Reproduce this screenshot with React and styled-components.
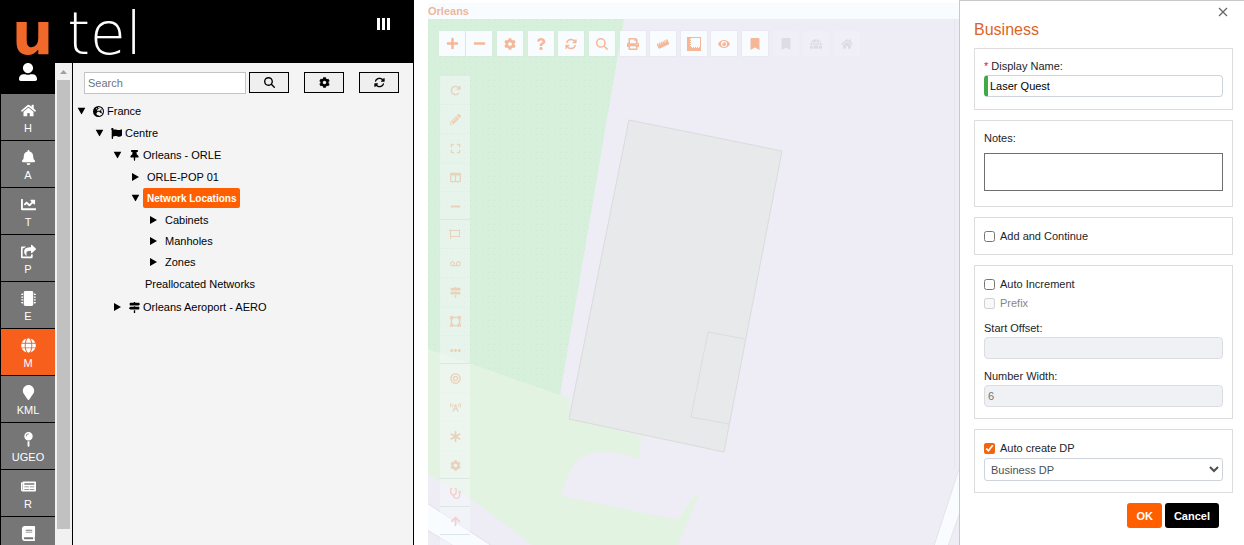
import React, { useState } from 'react';
import styled, { createGlobalStyle, css } from 'styled-components';
import {
    FaArrowUp, FaAsterisk, FaBell, FaBook, FaBookmark, FaBroadcastTower, FaBullseye, FaChartLine,
    FaCog, FaColumns, FaEllipsisH, FaExpand, FaEye, FaFlag, FaGlobe, FaHome, FaIgloo, FaMapMarker,
    FaMapPin, FaMapSigns, FaMicrochip, FaMinus, FaNewspaper, FaPencilAlt, FaPlus, FaPrint, FaQuestion,
    FaRulerHorizontal, FaShareSquare, FaStethoscope, FaThumbtack, FaTimes, FaUserAlt, FaVectorSquare,
    FaVoicemail,
} from 'react-icons/fa';
import { FaArrowRotateRight, FaArrowsRotate, FaEarthEurope, FaMagnifyingGlass } from 'react-icons/fa6';


const FrameIcon = () => (
    <svg width="14" height="14" viewBox="0 0 14 14" fill="currentColor">
        <path
            fillRule="evenodd"
            d="M0 0h14v14H0zM4 1v1H3v1h1v1H3v1h1v1H3v1h1v1H3v1h1v1h1v1h1v-1h1v1h1v-1h1v1h1v-1h1v1h1v-1h1V1z"
        />
    </svg>
);

const AreaIcon = () => (
    <svg width="12" height="10" viewBox="0 0 12 10" fill="none" stroke="currentColor">
        <path d="M1.5 0v10M0 1.5h10.500v6H1.500M10.500 0.500v8" />
    </svg>
);

const navItems = [
    { label: 'H', icon: FaHome },
    { label: 'A', icon: FaBell },
    { label: 'T', icon: FaChartLine },
    { label: 'P', icon: FaShareSquare },
    { label: 'E', icon: FaMicrochip },
    { label: 'M', icon: FaGlobe },
    { label: 'KML', icon: FaMapMarker },
    { label: 'UGEO', icon: FaMapPin },
    { label: 'R', icon: FaNewspaper },
    { label: '', title: 'Book', icon: FaBook },
];

const treeItems = [
    { level: 0, label: 'France', icon: FaEarthEurope, open: true },
    { level: 1, label: 'Centre', icon: FaFlag, open: true },
    { level: 2, label: 'Orleans - ORLE', icon: FaThumbtack, open: true },
    { level: 3, label: 'ORLE-POP 01' },
    { level: 3, label: 'Network Locations', open: true, selected: true },
    { level: 4, label: 'Cabinets' },
    { level: 4, label: 'Manholes' },
    { level: 4, label: 'Zones' },
    { level: 3, label: 'Preallocated Networks', leaf: true },
    { level: 2, label: 'Orleans Aeroport - AERO', icon: FaMapSigns },
];

const mapTools = [
    { name: 'Settings', icon: FaCog },
    { name: 'Help', icon: FaQuestion },
    { name: 'Refresh', icon: FaArrowsRotate },
    { name: 'Search', icon: FaMagnifyingGlass },
    { name: 'Print', icon: FaPrint },
    { name: 'Measure', icon: FaRulerHorizontal, tilt: true },
    { name: 'Frame', icon: FrameIcon },
    { name: 'View', icon: FaEye },
    { name: 'Bookmark', icon: FaBookmark },
    { name: 'Saved bookmark', icon: FaBookmark, disabled: true },
    { name: 'Building', icon: FaIgloo, disabled: true },
    { name: 'Home', icon: FaHome, disabled: true },
];

const drawTools = [
    [
        { name: 'Redo', icon: FaArrowRotateRight },
        { name: 'Edit', icon: FaPencilAlt },
        { name: 'Expand', icon: FaExpand },
        { name: 'Columns', icon: FaColumns },
        { name: 'Line', icon: FaMinus },
    ],
    [
        { name: 'Area', icon: AreaIcon },
        { name: 'Link', icon: FaVoicemail },
        { name: 'Signs', icon: FaMapSigns },
        { name: 'Shape', icon: FaVectorSquare },
        { name: 'More', icon: FaEllipsisH },
    ],
    [
        { name: 'Target', icon: FaBullseye },
        { name: 'Tower', icon: FaBroadcastTower },
        { name: 'Splice', icon: FaAsterisk },
        { name: 'Options', icon: FaCog },
    ],
    [{ name: 'Diagnose', icon: FaStethoscope, red: true }],
    [{ name: 'Up', icon: FaArrowUp, red: true }],
    [{ name: 'Remove', icon: FaTimes, red: true }],
];

const Sidebar = () => (
    <SidebarContainer>
        <Header>
            <Logo>
                <LogoMark>u</LogoMark>
                <LogoText>tel</LogoText>
            </Logo>
            <MenuButton aria-label="Menu">
                <svg width="13" height="12" viewBox="0 0 13 12" fill="#fff">
                    <rect width="3" height="12" />
                    <rect x="5" width="3" height="12" />
                    <rect x="10" width="3" height="12" />
                </svg>
            </MenuButton>
        </Header>
        <SidebarBody>
            <Nav>
                <UserButton aria-label="User"><FaUserAlt /></UserButton>
                {navItems.map(({ label, title, icon: Icon }) => (
                    <NavItem key={label || title} href="#" aria-label={title} $active={label === 'M'}>
                        <Icon />
                        <span>{label}</span>
                    </NavItem>
                ))}
            </Nav>
            <ScrollTrack>
                <svg width="7" height="4" viewBox="0 0 7 4" fill="#a0a0a0"><path d="M0 4L3.500 0L7 4z" /></svg>
                <ScrollThumb />
            </ScrollTrack>
            <Explorer>
                <SearchBar>
                    <SearchInput placeholder="Search" aria-label="Search" />
                    <SearchButton aria-label="Search"><FaMagnifyingGlass /></SearchButton>
                    <ExplorerButton aria-label="Settings"><FaCog /></ExplorerButton>
                    <ExplorerButton aria-label="Refresh"><FaArrowsRotate /></ExplorerButton>
                </SearchBar>
                <Tree>
                    {treeItems.map(({ level, label, icon: Icon, open, selected, leaf }) => (
                        <TreeRow key={label} $level={level}>
                            {!leaf && (
                                <Toggle aria-label={`Toggle ${label}`} $open={open}>
                                    <svg width="7" height="8" viewBox="0 0 7 8"><path d="M0 0L7 4L0 8z" /></svg>
                                </Toggle>
                            )}
                            <TreeLabel href="#" $selected={selected} $leaf={leaf} $branch={Boolean(Icon)}>
                                {Icon && <Icon />}
                                {label}
                            </TreeLabel>
                        </TreeRow>
                    ))}
                </Tree>
            </Explorer>
        </SidebarBody>
    </SidebarContainer>
);

const Map = () => (
    <MapContainer>
        <MapHeader>Orleans</MapHeader>
        <MapBody>
            <MapCanvas viewBox="428 19 531 526" preserveAspectRatio="xMinYMin slice">
                <defs>
                    <pattern id="dots" width="6" height="6" patternUnits="userSpaceOnUse">
                        <rect x="2" y="2" width="1" height="1" fill="#cde7d4" />
                    </pattern>
                </defs>
                <rect x="428" y="19" width="531" height="526" fill="#eeecf5" />
                <path
                    fill="#e3f3e1"
                    d="M428 349L560 395L569 398V419L641 436L639 459Q600 444 579 459Q569 467 561 496L678 520L694 496H698L678 545H532L470 498L428 474z"
                />
                <path fill="#d7f0dc" d="M428 19H624L560 395L428 349z" />
                <path fill="url(#dots)" d="M428 19H624L560 395L428 349z" />
                <path fill="#e8e9ea" stroke="#d9dbdb" d="M629 120L782 151L724 452L569 419z" />
                <path fill="none" stroke="#dcdddd" d="M745 339L708 332L691 417L729 424" />
                <path fill="#f8fcff" stroke="#dfe1e6" d="M427 503L492 546H454L427 530z" />
                <path fill="#f8fcff" stroke="#e2e4ea" d="M960 466L934 546H948L960 512z" />
                <path stroke="#e7e5ee" d="M954.500 19V470" />
            </MapCanvas>
            <MapToolbar>
                <ZoomGroup>
                    <MapButton aria-label="Zoom in" $large><FaPlus /></MapButton>
                    <MapButton aria-label="Zoom out" $large><FaMinus /></MapButton>
                </ZoomGroup>
                <ToolGroup>
                    {mapTools.map(({ name, icon: Icon, disabled, tilt }) => (
                        <MapButton key={name} aria-label={name} disabled={disabled} $tilt={tilt}>
                            <Icon />
                        </MapButton>
                    ))}
                </ToolGroup>
            </MapToolbar>
            <DrawToolbar>
                {drawTools.map((group) => (
                    <DrawGroup key={group[0].name}>
                        {group.map(({ name, icon: Icon, red }) => (
                            <DrawButton key={name} aria-label={name} $red={red}><Icon /></DrawButton>
                        ))}
                    </DrawGroup>
                ))}
            </DrawToolbar>
        </MapBody>
    </MapContainer>
);

const BusinessPanel = () => {
    const [name, setName] = useState('Laser Quest');

    return (
        <Panel>
            <CloseButton aria-label="Close">
                <svg width="10" height="10" viewBox="0 0 10 10" fill="none" stroke="#666">
                    <path d="M1 1L9 9M9 1L1 9" strokeWidth="1.300" />
                </svg>
            </CloseButton>
            <PanelTitle>Business</PanelTitle>
            <Fieldset $bottom={12}>
                <Label htmlFor="displayName"><Required>*</Required> Display Name:</Label>
                <TextInput id="displayName" value={name} onChange={(e) => setName(e.target.value)} $valid />
            </Fieldset>
            <Fieldset $bottom={15}>
                <Label htmlFor="notes" $gap={6}>Notes:</Label>
                <Notes id="notes" />
            </Fieldset>
            <Fieldset $bottom={8}>
                <CheckLabel><Checkbox type="checkbox" />Add and Continue</CheckLabel>
            </Fieldset>
            <Fieldset $bottom={11}>
                <CheckLabel><Checkbox type="checkbox" />Auto Increment</CheckLabel>
                <CheckLabel $disabled><Checkbox type="checkbox" disabled />Prefix</CheckLabel>
                <Field>
                    <Label htmlFor="startOffset">Start Offset:</Label>
                    <TextInput id="startOffset" disabled />
                </Field>
                <Field $spaced>
                    <Label htmlFor="numberWidth">Number Width:</Label>
                    <TextInput id="numberWidth" defaultValue="6" disabled />
                </Field>
            </Fieldset>
            <Fieldset $bottom={11}>
                <CheckLabel><Checkbox type="checkbox" defaultChecked />Auto create DP</CheckLabel>
                <Select aria-label="DP type">
                    <option>Business DP</option>
                </Select>
            </Fieldset>
            <Actions>
                <ActionButton $primary>OK</ActionButton>
                <ActionButton>Cancel</ActionButton>
            </Actions>
        </Panel>
    );
};

const App = () => (
    <>
        <GlobalStyle />
        <Page>
            <Sidebar />
            <Map />
            <BusinessPanel />
        </Page>
    </>
);

export default App;

const GlobalStyle = createGlobalStyle`
    * {
        box-sizing: border-box;
    }

    body {
        margin: 0;
        background: #fff;
        overflow: hidden;
    }

    body, button, input, select, textarea {
        font-family: "Liberation Sans", Arial, sans-serif;
        font-size: 11px;
    }

    button {
        padding: 0;
        cursor: pointer;
    }

    svg {
        display: block;
        flex-shrink: 0;
    }
`;

const Page = styled.div`
    display: flex;
    height: 100vh;
    overflow: hidden;
`;

const SidebarContainer = styled.div`
    display: flex;
    flex-direction: column;
    width: 414px;
    flex-shrink: 0;
    margin-right: 14px;
    background: #000;
`;

const Header = styled.header`
    display: flex;
    align-items: flex-start;
    justify-content: space-between;
    height: 63px;
    padding: 0 24px 0 12px;
    flex-shrink: 0;
`;

const Logo = styled.div`
    display: flex;
    align-items: baseline;
    font-size: 58px;
    line-height: normal;
`;

const LogoMark = styled.span`
    color: #f0682a;
    font-family: "DejaVu Sans", sans-serif;
    font-weight: 700;
    margin-right: 14px;
`;

const LogoText = styled.span`
    color: #fff;
    font-family: "DejaVu Sans Light", "DejaVu Sans", sans-serif;
    font-weight: 200;
`;

const MenuButton = styled.button`
    border: 0;
    background: none;
    margin-top: 18px;
`;

const SidebarBody = styled.div`
    display: flex;
    flex: 1;
    min-height: 0;
`;

const Nav = styled.nav`
    width: 55px;
    padding-left: 1px;
    overflow: hidden;
`;

const UserButton = styled.button`
    display: flex;
    justify-content: center;
    width: 100%;
    height: 30px;
    border: 0;
    background: #000;
    color: #fff;
    font-size: 18px;
`;

const NavItem = styled.a`
    display: flex;
    flex-direction: column;
    align-items: center;
    gap: 3px;
    height: 47px;
    padding-top: 9px;
    border-top: 1px solid #000;
    background: ${({ $active }) => ($active ? '#f75f1c' : '#767676')};
    color: #fff;
    font-size: 15px;
    text-decoration: none;

    span {
        font-size: 11px;
        line-height: 14px;
    }
`;

const ScrollTrack = styled.div`
    display: flex;
    flex-direction: column;
    align-items: center;
    width: 17px;
    padding-top: 7px;
    padding-bottom: 16px;
    background: #f1f1f1;
`;

const ScrollThumb = styled.div`
    width: 13px;
    flex: 1;
    margin-top: 6px;
    background: #c1c1c1;
`;

const Explorer = styled.div`
    flex: 1;
    margin: 0 1px;
    padding-top: 9px;
    background: #f4f4f4;
`;

const SearchBar = styled.div`
    display: flex;
    align-items: flex-start;
    padding: 0 14px 0 11px;
`;

const SearchInput = styled.input`
    flex: 1;
    min-width: 0;
    height: 22px;
    padding: 0 3px;
    border: 1px solid #c4c4c4;
    background: #fff;

    &::placeholder {
        color: #6c757d;
    }
`;

const ExplorerButton = styled.button`
    display: flex;
    align-items: center;
    justify-content: center;
    width: 40px;
    height: 21px;
    margin-left: 15px;
    border: 1px solid #000;
    background: #efefef;
    color: #000;
`;

const SearchButton = styled(ExplorerButton)`
    margin-left: 3px;
`;

const Tree = styled.div`
    padding: 6px 0 0 5px;
`;

const TreeRow = styled.div`
    display: flex;
    align-items: center;
    padding-left: ${({ $level }) => $level * 18}px;
`;

const Toggle = styled.button`
    display: flex;
    align-items: center;
    width: 8px;
    height: 8px;
    margin-right: 3px;
    border: 0;
    background: none;

    svg {
        transform: ${({ $open }) => ($open ? 'rotate(90deg)' : 'none')};
    }
`;

const TreeLabel = styled.a`
    display: flex;
    align-items: center;
    gap: 3px;
    height: ${({ $branch }) => ($branch ? '22px' : '21px')};
    padding: 0 4px;
    border-radius: 2px;
    color: #000;
    text-decoration: none;
    white-space: nowrap;

    ${({ $leaf }) => $leaf && css`
        height: 24px;
        margin-left: 9px;
    `}

    ${({ $selected }) => $selected && css`
        height: 20px;
        margin: 1px 0;
        background: #ff5f00;
        color: #fff;
        font-size: 10px;
        font-weight: 700;
    `}
`;

const MapContainer = styled.main`
    display: flex;
    flex-direction: column;
    flex: 1;
    min-width: 0;
    padding-top: 3px;
`;

const MapHeader = styled.div`
    background: #f8fcff;
    color: #eeb79b;
    font-weight: 700;
    line-height: 16px;
`;

const MapBody = styled.div`
    position: relative;
    flex: 1;
    min-height: 0;
    overflow: hidden;
`;

const MapCanvas = styled.svg`
    position: absolute;
    inset: 0;
    width: 100%;
    height: 100%;
`;

const MapToolbar = styled.div`
    position: relative;
    display: flex;
    gap: 5px;
    padding: 12px 0 0 11px;
`;

const ZoomGroup = styled.div`
    display: flex;
    gap: 1px;
`;

const ToolGroup = styled.div`
    display: flex;
    justify-content: space-between;
    width: 363px;
`;

const MapButton = styled.button`
    display: flex;
    align-items: center;
    justify-content: center;
    width: 26px;
    height: 25px;
    border: 0;
    background: #f8fcff;
    color: #f4b899;
    font-size: ${({ $large }) => ($large ? '13px' : '12px')};
    box-shadow: 0 0 1px #d5dbe0;

    &:disabled {
        background: #f0eff7;
        color: #dddce5;
        box-shadow: none;
    }

    svg {
        transform: ${({ $tilt }) => ($tilt ? 'rotate(-25deg)' : 'none')};
    }
`;

const DrawToolbar = styled.div`
    position: relative;
    width: 30px;
    margin: 20px 0 0 12px;
`;

const DrawGroup = styled.div`
    display: grid;
    gap: 1px;
    background: rgba(248, 252, 255, 0.3);
    box-shadow: inset 0 -1px #d5e3dc;
`;

const DrawButton = styled.button`
    display: flex;
    align-items: center;
    justify-content: center;
    height: 28px;
    border: 0;
    background: rgba(248, 252, 255, 0.2);
    color: ${({ $red }) => ($red ? '#f3d0cc' : '#e9d2bb')};
    font-size: 11px;
`;

const Panel = styled.aside`
    display: flex;
    flex-direction: column;
    width: 285px;
    flex-shrink: 0;
    padding: 6px 11px 0 14px;
    border-top: 1px solid #c8c8cc;
    border-left: 1px solid #c8c8cc;
    background: #fff;
    color: #212529;
`;

const CloseButton = styled.button`
    align-self: flex-end;
    margin-right: 5px;
    border: 0;
    background: none;
`;

const PanelTitle = styled.h1`
    margin: 3px 0 8px;
    color: #dc6426;
    font-size: 16px;
    font-weight: 400;
    line-height: 20px;
`;

const Fieldset = styled.section`
    display: flex;
    flex-direction: column;
    padding: 9px 9px ${({ $bottom }) => $bottom}px;
    margin-bottom: 10px;
    border: 1px solid #ddd;
`;

const Label = styled.label`
    line-height: 17px;
    margin-bottom: ${({ $gap }) => $gap || 0}px;
`;

const Required = styled.span`
    color: #e02020;
`;

const Field = styled.div`
    display: flex;
    flex-direction: column;
    margin-top: ${({ $spaced }) => ($spaced ? '9px' : '7px')};
`;

const TextInput = styled.input`
    height: 22px;
    padding: 0 3px;
    border: 1px solid #ced4da;
    border-radius: 4px;
    color: #000;

    ${({ $valid }) => $valid && css`
        padding-left: 2px;
        border-left: 4px solid #42a948;
    `}

    &:disabled {
        background: #eff1f4;
        border-color: #dadde0;
        color: #6c757d;
    }
`;

const Notes = styled.textarea`
    height: 38px;
    border: 1px solid #6f6f6f;
    resize: none;
`;

const CheckLabel = styled.label`
    display: flex;
    align-items: center;
    gap: 5px;
    line-height: 19px;
    color: ${({ $disabled }) => ($disabled ? '#868686' : '#212529')};
`;

const Checkbox = styled.input`
    width: 11px;
    height: 11px;
    margin: 0;
    accent-color: #f2650f;
`;

const Select = styled.select`
    height: 23px;
    padding: 0 2px;
    border: 1px solid #ced4da;
    border-radius: 3px;
    background: #fff;
    color: #495057;
`;

const Actions = styled.div`
    display: flex;
    justify-content: flex-end;
    gap: 3px;
    padding-right: 14px;
`;

const ActionButton = styled.button`
    height: 25px;
    padding: 0 9px;
    border: 0;
    border-radius: 3px;
    background: ${({ $primary }) => ($primary ? '#ff5f00' : '#000')};
    color: #fff;
    font-weight: 700;
`;
